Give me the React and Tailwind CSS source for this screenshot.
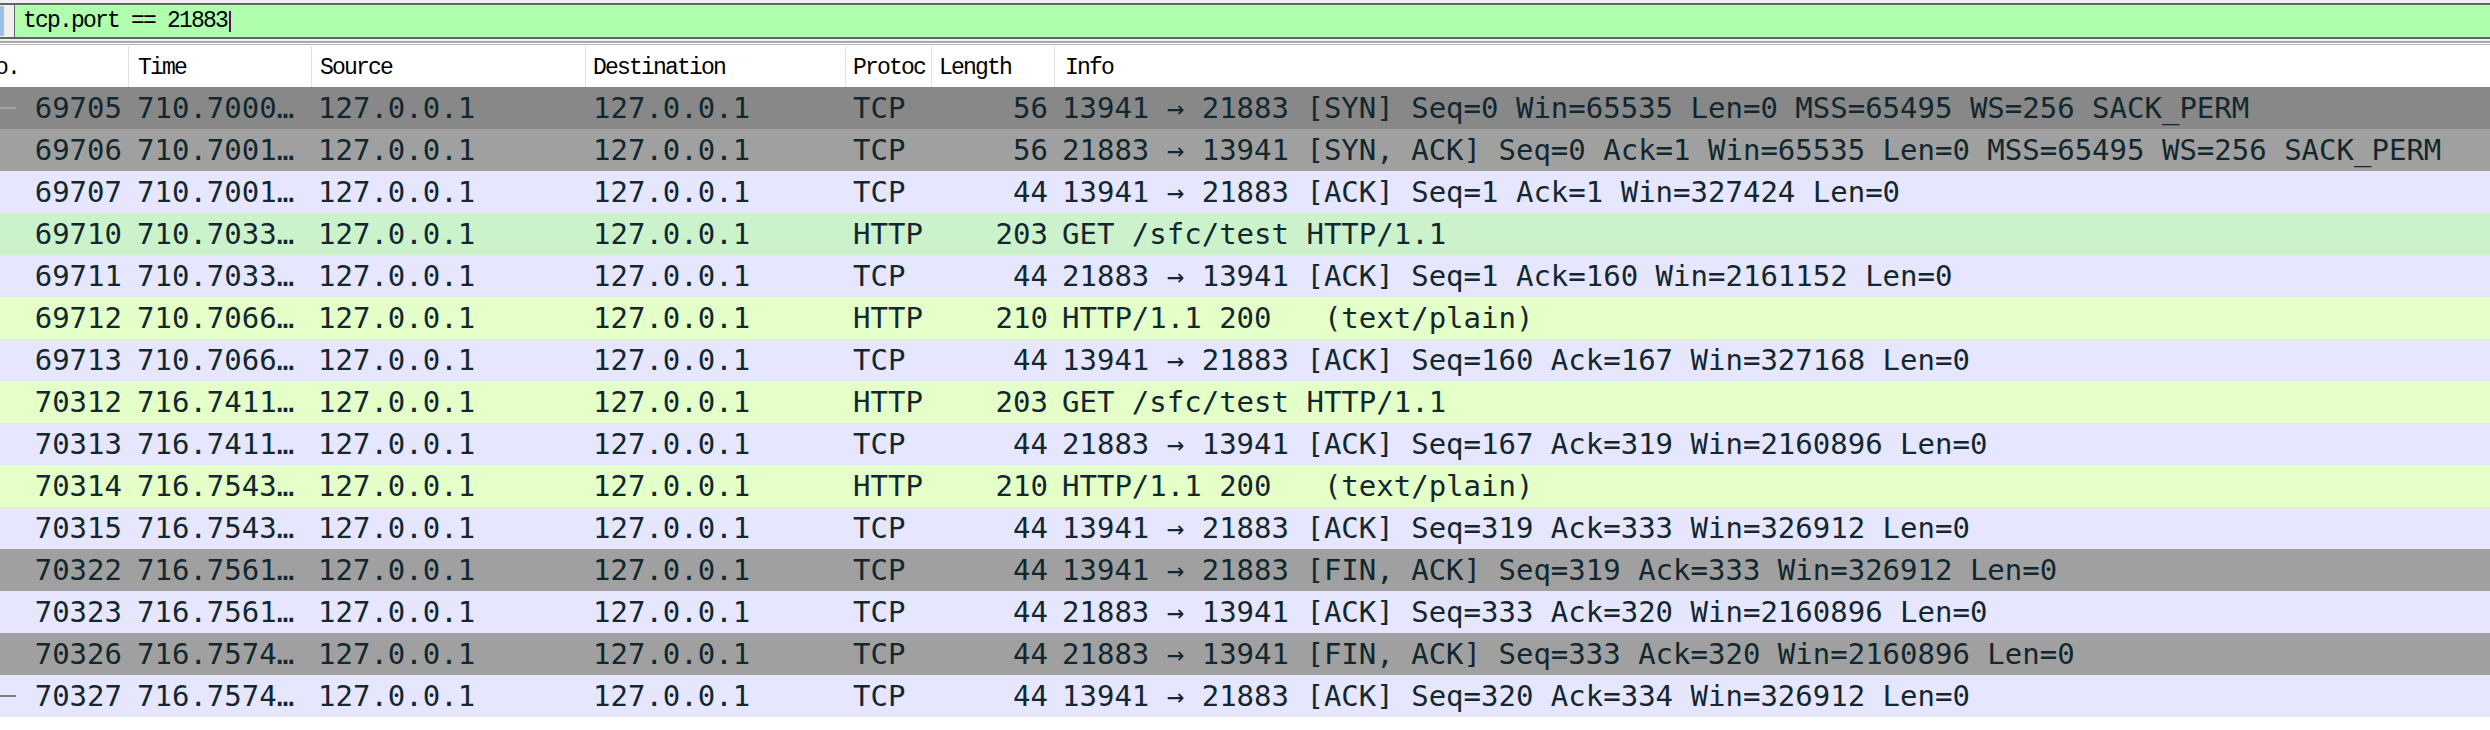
const cols = 'grid grid-cols-[150px_183px_274px_260px_86px_123px_minmax(0,1fr)]'

const packets = [
  { no: '69705', time: '710.7000…', proto: 'TCP', len: '56', info: '13941 → 21883 [SYN] Seq=0 Win=65535 Len=0 MSS=65495 WS=256 SACK_PERM', bg: 'bg-[#888888]', mark: 'bg-[#9aa6a6]' },
  { no: '69706', time: '710.7001…', proto: 'TCP', len: '56', info: '21883 → 13941 [SYN, ACK] Seq=0 Ack=1 Win=65535 Len=0 MSS=65495 WS=256 SACK_PERM', bg: 'bg-[#a0a0a0]' },
  { no: '69707', time: '710.7001…', proto: 'TCP', len: '44', info: '13941 → 21883 [ACK] Seq=1 Ack=1 Win=327424 Len=0', bg: 'bg-[#e7e6ff]' },
  { no: '69710', time: '710.7033…', proto: 'HTTP', len: '203', info: 'GET /sfc/test HTTP/1.1', bg: 'bg-[#ccf2cc]' },
  { no: '69711', time: '710.7033…', proto: 'TCP', len: '44', info: '21883 → 13941 [ACK] Seq=1 Ack=160 Win=2161152 Len=0', bg: 'bg-[#e7e6ff]' },
  { no: '69712', time: '710.7066…', proto: 'HTTP', len: '210', info: 'HTTP/1.1 200   (text/plain)', bg: 'bg-[#e4ffc7]' },
  { no: '69713', time: '710.7066…', proto: 'TCP', len: '44', info: '13941 → 21883 [ACK] Seq=160 Ack=167 Win=327168 Len=0', bg: 'bg-[#e7e6ff]' },
  { no: '70312', time: '716.7411…', proto: 'HTTP', len: '203', info: 'GET /sfc/test HTTP/1.1', bg: 'bg-[#e4ffc7]' },
  { no: '70313', time: '716.7411…', proto: 'TCP', len: '44', info: '21883 → 13941 [ACK] Seq=167 Ack=319 Win=2160896 Len=0', bg: 'bg-[#e7e6ff]' },
  { no: '70314', time: '716.7543…', proto: 'HTTP', len: '210', info: 'HTTP/1.1 200   (text/plain)', bg: 'bg-[#e4ffc7]' },
  { no: '70315', time: '716.7543…', proto: 'TCP', len: '44', info: '13941 → 21883 [ACK] Seq=319 Ack=333 Win=326912 Len=0', bg: 'bg-[#e7e6ff]' },
  { no: '70322', time: '716.7561…', proto: 'TCP', len: '44', info: '13941 → 21883 [FIN, ACK] Seq=319 Ack=333 Win=326912 Len=0', bg: 'bg-[#a0a0a0]' },
  { no: '70323', time: '716.7561…', proto: 'TCP', len: '44', info: '21883 → 13941 [ACK] Seq=333 Ack=320 Win=2160896 Len=0', bg: 'bg-[#e7e6ff]' },
  { no: '70326', time: '716.7574…', proto: 'TCP', len: '44', info: '21883 → 13941 [FIN, ACK] Seq=333 Ack=320 Win=2160896 Len=0', bg: 'bg-[#a0a0a0]' },
  { no: '70327', time: '716.7574…', proto: 'TCP', len: '44', info: '13941 → 21883 [ACK] Seq=320 Ack=334 Win=326912 Len=0', bg: 'bg-[#e7e6ff]', mark: 'bg-[#808080]' },
]

const headers = [
  { label: 'No.', pad: 'pl-[4px]' },
  { label: 'Time', pad: 'pl-[9px]' },
  { label: 'Source', pad: 'pl-[8px]' },
  { label: 'Destination', pad: 'pl-[7px]' },
  { label: 'Protoc', pad: 'pl-[7px]' },
  { label: 'Length', pad: 'pl-[7px]' },
  { label: 'Info', pad: 'pl-[10px]' },
]

// SimSun-ish look: a mono face, bigger and squeezed to ~12px per char
const uiFont = "font-['Liberation_Mono',monospace] text-[23px] tracking-[-1.8px] text-black"

function FilterBar() {
  return (
    <div className="bg-[#f0f0f0]">
      <div className="h-[3px]" />
      <div className="flex h-[36px] border-y-2 border-[#646464]">
        <div className="w-[14px] flex items-center">
          <div className="w-[4px] h-[30px] bg-[#9cc0e6]" />
        </div>
        <div className={`flex-1 flex items-center border-l border-[#646464] bg-[#afffaf] pl-[8px] pt-[1px] ${uiFont}`}>
          <span className="whitespace-pre">tcp.port == 21883</span>
          <span className="ml-[2px] w-[2px] h-[21px] bg-[#5b0b5b]" />
        </div>
      </div>
      <div className="h-[2px]" />
      <div className="h-[2px] bg-[#a9a9a9]" />
      <div className="h-[1px] bg-white" />
      <div className="h-[1px] bg-[#b4b4b4]" />
      <div className="h-[1px] bg-white" />
    </div>
  )
}

function PacketRow({ p }) {
  return (
    <div className={`${cols} h-[42px] items-center ${p.bg}`}>
      <div className="flex items-center pr-[7px]">
        {p.mark && <div className={`ml-[21px] w-[16px] h-[2px] ${p.mark}`} />}
        <span className="ml-auto">{p.no}</span>
      </div>
      <div className="pl-[8px] whitespace-nowrap">{p.time}</div>
      <div className="pl-[6px]">127.0.0.1</div>
      <div className="pl-[7px]">127.0.0.1</div>
      <div className="pl-[7px]">{p.proto}</div>
      <div className="pr-[7px] text-right">{p.len}</div>
      <div className="pl-[7px] whitespace-pre">{p.info}</div>
    </div>
  )
}

export default function App() {
  return (
    <div className="w-[2490px] h-[730px] overflow-hidden bg-white">
      <FilterBar />
      <div className="-ml-[21px]">
        <div className={`${cols} h-[41px] items-center bg-white ${uiFont}`}>
          {headers.map((h, i) => (
            <div
              key={h.label}
              className={`h-full flex items-center pt-[4px] whitespace-nowrap ${h.pad} ${i < headers.length - 1 ? 'border-r border-[#e3e3e3]' : ''}`}
            >
              {h.label}
            </div>
          ))}
        </div>
        <div className="font-['DejaVu_Sans_Mono',monospace] text-[29px] text-[#12272e] leading-none">
          {packets.map((p) => (
            <PacketRow key={p.no} p={p} />
          ))}
        </div>
      </div>
    </div>
  )
}
